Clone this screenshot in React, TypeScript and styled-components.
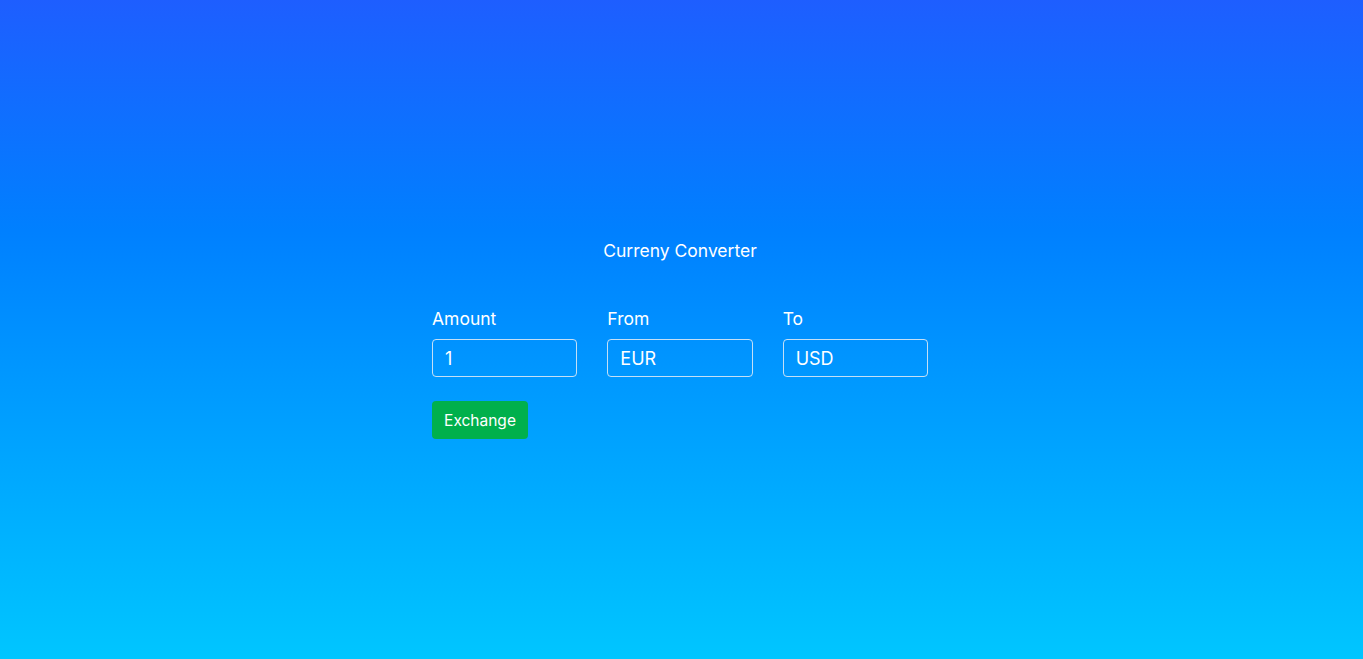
import React, { ReactElement, useState } from 'react';
import styled, { createGlobalStyle } from 'styled-components';

const GlobalStyle = createGlobalStyle`
  html, body {
    margin: 0;
    padding: 0;
    height: 100%;
  }
  body {
    font-family: Inter, "Noto Sans", sans-serif;
    color: #ffffff;
  }
  #root {
    height: 100%;
  }
`;

interface FieldProps {
  label: string;
  value: string;
  onChange: (v: string) => void;
}

const Field = ({ label, value, onChange }: FieldProps): ReactElement => (
  <FieldWrap>
    <Label>{label}</Label>
    <Input value={value} onChange={(e) => onChange(e.target.value)} />
  </FieldWrap>
);

const App = (): ReactElement => {
  const [amount, setAmount] = useState('1');
  const [from, setFrom] = useState('EUR');
  const [to, setTo] = useState('USD');

  return (
    <React.Fragment>
      <GlobalStyle />
      <Page>
        <Converter>
          <Title>Curreny Converter</Title>
          <Fields>
            <Field label="Amount" value={amount} onChange={setAmount} />
            <Field label="From" value={from} onChange={setFrom} />
            <Field label="To" value={to} onChange={setTo} />
          </Fields>
          <ExchangeButton type="button">Exchange</ExchangeButton>
        </Converter>
      </Page>
    </React.Fragment>
  );
};

const Page = styled.div`
  width: 100%;
  min-height: 100vh;
  background: linear-gradient(
    to bottom,
    #1e5eff 0%,
    #0080ff 35%,
    #00c6ff 100%
  );
  display: flex;
  justify-content: center;
  box-sizing: border-box;
  padding: 240px 3px 0 0;
`;

const Converter = styled.div`
  width: 496px;
  display: flex;
  flex-direction: column;
  align-items: flex-start;
`;

const Title = styled.h1`
  align-self: stretch;
  margin: 0 0 46px;
  text-align: center;
  font-size: 17.5px;
  font-weight: 400;
  line-height: 22px;
`;

const Fields = styled.div`
  align-self: stretch;
  display: flex;
  gap: 30px;
  margin-bottom: 24px;
`;

const FieldWrap = styled.div`
  flex: 1;
  min-width: 0;
  display: flex;
  flex-direction: column;
  gap: 9px;
`;

const Label = styled.label`
  font-size: 17.5px;
  line-height: 22px;
`;

const Input = styled.input`
  box-sizing: border-box;
  width: 100%;
  height: 38px;
  padding: 0 12px;
  border: 1px solid rgba(230, 236, 245, 0.85);
  border-radius: 4px;
  background: transparent;
  color: #ffffff;
  font-family: Inter, "Noto Sans", sans-serif;
  font-size: 18px;
  outline: none;
`;

const ExchangeButton = styled.button`
  box-sizing: border-box;
  width: 96px;
  height: 38px;
  padding: 0;
  border: none;
  border-radius: 4px;
  background: #00b04c;
  color: #ffffff;
  font-family: Inter, "Noto Sans", sans-serif;
  font-size: 15.5px;
  cursor: pointer;
`;

export default App;
